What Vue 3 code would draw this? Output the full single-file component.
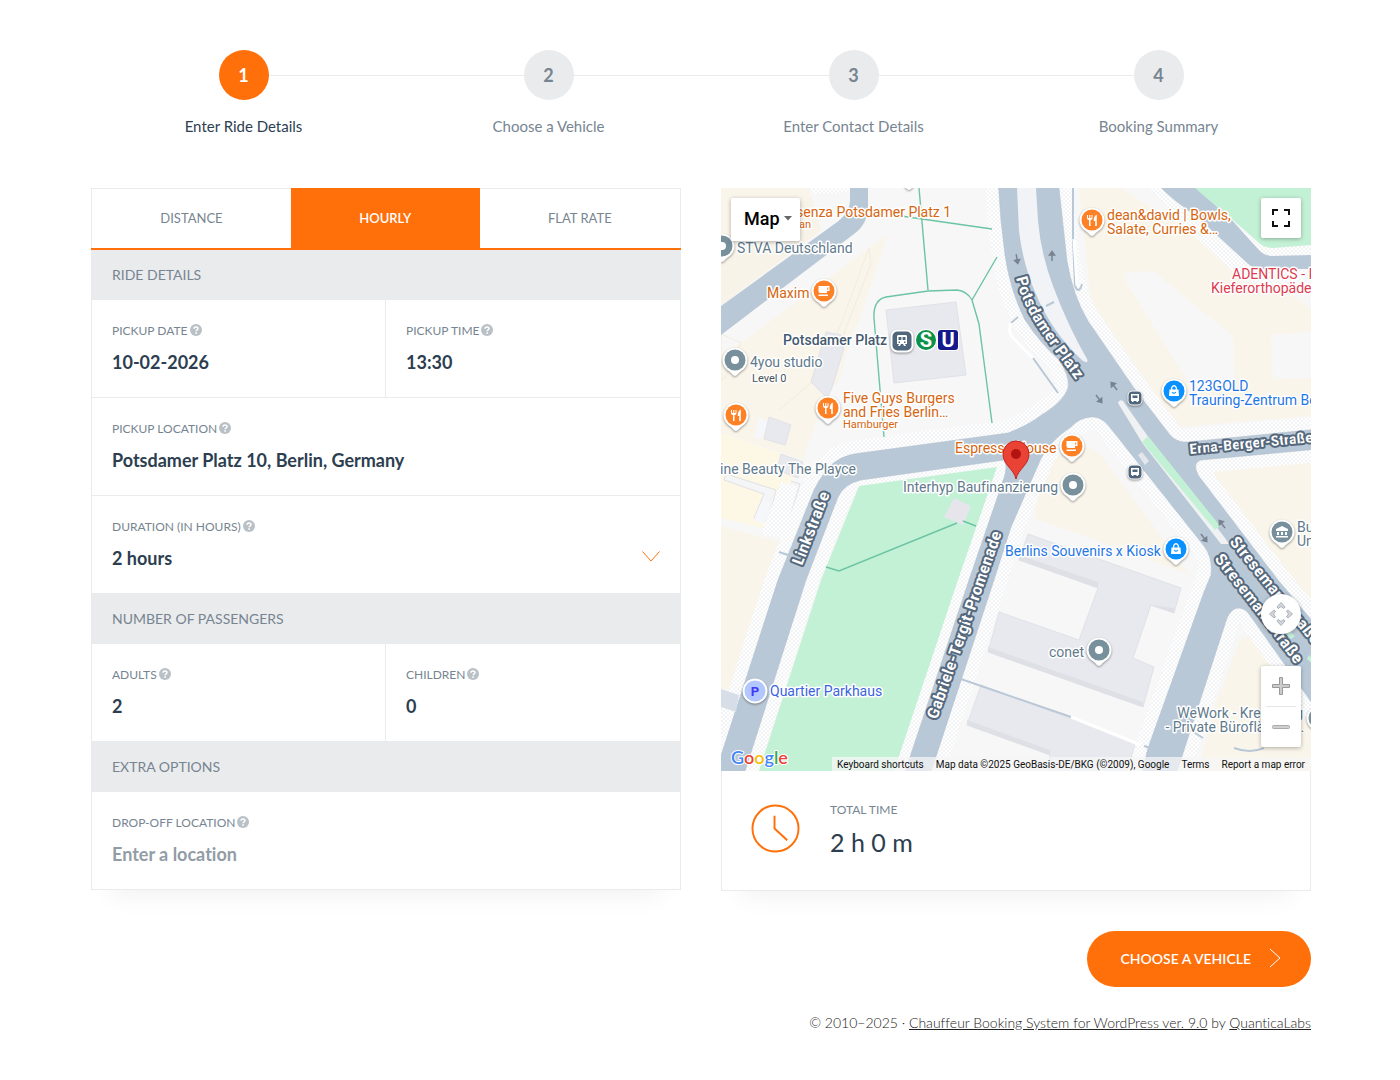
<template>
  <div class="booking">
    <ol class="steps">
      <li v-for="(step, index) in steps" :key="step" class="step" :class="{ active: index === 0 }">
        <span class="step-number">{{ index + 1 }}</span>
        <span class="step-label">{{ step }}</span>
      </li>
    </ol>

    <div class="columns">
      <form class="ride-form" @submit.prevent>
        <div class="tabs">
          <button
            v-for="tab in tabs"
            :key="tab"
            type="button"
            class="tab"
            :class="{ selected: tab === activeTab }"
            @click="activeTab = tab"
          >{{ tab }}</button>
        </div>

        <div class="form-body">
          <template v-for="section in sections" :key="section.title">
            <h2 class="section-title">{{ section.title }}</h2>
            <div class="fields">
              <div v-for="field in section.fields" :key="field.id" class="field" :class="{ half: field.half }">
                <div class="field-head">
                  <label :for="field.id">{{ field.label }}</label>
                  <svg class="help" viewBox="0 0 12 12" aria-hidden="true">
                    <circle cx="6" cy="6" r="6" fill="#b9c0c6" />
                    <path d="M4 4.7C4 2.4 8 2.4 8 4.6C8 5.9 6.1 5.8 6.1 7.3" fill="none" stroke="#fff" stroke-width="1.5" />
                    <rect x="5.3" y="8.2" width="1.6" height="1.6" fill="#fff" />
                  </svg>
                </div>
                <div v-if="field.options" class="select-wrap">
                  <select :id="field.id" v-model="field.value">
                    <option v-for="option in field.options" :key="option">{{ option }}</option>
                  </select>
                  <svg class="chevron" viewBox="0 0 18 11" aria-hidden="true">
                    <path d="M.5 .5L9 10L17.500 .5" fill="none" stroke="#ff700a" />
                  </svg>
                </div>
                <input v-else :id="field.id" v-model="field.value" type="text" :placeholder="field.placeholder" />
              </div>
            </div>
          </template>
        </div>
      </form>

      <div class="side">
        <div class="map">
          <svg class="map-canvas" viewBox="0 0 590 583" preserveAspectRatio="xMidYMid slice">
            <defs>
              <pattern id="pavement" width="4" height="4" patternUnits="userSpaceOnUse">
                <rect width="4" height="4" fill="#fff" />
                <circle cx="1" cy="1" r=".9" fill="#eef0f1" />
                <circle cx="3" cy="3" r=".9" fill="#eef0f1" />
              </pattern>
              <path
                id="roads"
                d="M277 -9L280 33L284 67Q289 102 304 132Q320 156 338 172Q349 188 347 200Q342 214 322 226Q306 238 287 245L140 265Q116 267 104 284Q98 292 93 302L57 392L-5 583V596H20L85 392L117 309Q123 296 140 292L283 272Q287 278 283 290L248 392L180 596H206L273 392L290 339L318 275Q326 255 350 239Q358 230 370 229Q379 228 387 237L483 358Q492 370 490 387L483 404L427 560L418 596H452L506 430Q511 420 517 420Q524 420 528 426L598 525V441L557 392L477 287Q471 275 480 272L598 261V241L467 254Q456 255 449 247L413 200L367 133Q352 108 346 73L337 -9Z"
              />
              <path id="street-potsdamer" d="M295 90C304 130 332 158 372 216" />
              <path id="street-link" d="M81 378L116 288" />
              <path id="street-gabriele" d="M216 532L288 325" />
              <path id="street-erna" d="M469 266L602 253" />
              <path id="street-strese-a" d="M508 354L562 421Q582 443 612 484" />
              <path id="street-strese-b" d="M493 371L547 440L598 508" />
            </defs>

            <rect width="590" height="583" fill="#f7f7f7" />

            <!-- city blocks -->
            <g fill="#faf5ea">
              <path d="M0 0H88L96 46L0 117Z" />
              <path d="M167 46L138 133L130 150L117 195L105 205L82 272L0 245V165L20 155Z" />
              <path d="M0 245L78 272L70 295L42 340L0 330Z" fill="#fdf7e6" />
              <path d="M0 338L60 354L54 375L10 503L0 500Z" />
              <path d="M358 0H400L590 120V228L457 239L370 113Z" />
              <path d="M313 330L320 297Q330 262 352 260Q374 257 381 269L468 386Z" />
              <path d="M493 272L590 264V415L494 292Z" />
              <path d="M519 452L533 446L590 525V583H477L493 520Z" />
            </g>
            <path d="M88 0H129V4L94 6Z" fill="url(#pavement)" />
            <path d="M0 68L90 8L100 42L0 117Z" fill="#f8f3e8" />
            <path d="M403 85L432 83L512 148L514 202L471 200L406 96ZM550 147L590 144V190L552 191Z" fill="#f7f7f7" />
            <path d="M0 146L20 155L4 190L0 192ZM58 222L96 190M96 190L120 136L148 60L150 76L123 145L105 205" fill="none" stroke="#f1ece0" />
            <path d="M5 286L55 302L47 334L33 330L43 306L3 292ZM70 293L79 296L61 354" fill="#f4f5f7" stroke="#e2e1e3" />
            <path d="M38 230L48 233L40 252L33 249ZM42 311L49 314L43 336L33 332Z" fill="#f5f7fa" />
            <path d="M60 294L77 299L62 350L40 346Z" fill="url(#pavement)" />

            <!-- buildings -->
            <g fill="#e8e9ee" stroke="#e1e2e8" stroke-width="1">
              <path d="M165 122L235 114L245 187L173 195Z" />
              <path d="M105 144L120 147L123 160L111 200L106 210L90 194Z" />
              <path d="M48 229L70 237L64 257L43 251Z" />
              <path d="M60 266L82 274L77 290L56 282Z" />
              <path d="M307 346L460 400L453 425L430 417L412 470L433 479L422 519L267 464L278 424L358 452L377 400L298 372Z" />
              <path d="M260 497L415 555L401 596H325L329 567L246 537Z" />
            </g>
            <path d="M267 459L422 514V519L267 464ZM246 532L329 562V567L246 537ZM412 415L453 420V425L428 417ZM298 367L377 394V400L298 372Z" fill="#dfe0e6" />

            <!-- streets -->
            <use href="#roads" fill="none" stroke="url(#pavement)" stroke-width="26" stroke-linejoin="round" />
            <path d="M429 0L470 45L522 93L545 96H590V45H550L505 0Z" fill="url(#pavement)" />
            <path d="M472 0L512 32L538 55Q543 60 552 60L590 57V0Z" fill="#c3f1d5" />
            <path d="M440 0Q455 15 474 27L526 75Q532 81 543 81H590V67L550 68Q542 67 537 61L510 31L474 0Z" fill="#b9c8d7" />
            <path d="M129 0H147V18Q147 36 133 46L0 147V118L112 37Q129 26 129 12Z" fill="#b9c8d7" />
            <path d="M138 298L276 279L237 392L173 583H38L100 392Z" fill="#c3f1d5" />
            <use href="#roads" fill="#b9c8d7" stroke="#aebdcc" stroke-width=".5" />
            <path d="M296 0H315L317 33Q320 66 332 98Q347 138 366 171Q368 176 362 173Q331 145 314 104Q302 76 298 43Z" fill="#f1f3f6" />
            <path d="M397 215Q398 211 402 213L428 250L504 350L508 356L500 356L422 256Z" fill="#f0f1f3" />
            <path d="M427 248L499 338L494 342L421 254ZM568 443L574 448L570 451L566 447ZM588 467L596 475V480L586 471Z" fill="#c3f1d5" />
            <path d="M417 267L421 264L428 273L424 277Z" fill="#e4e6eb" />
            <path d="M0 501L18 507L15 524L0 519Z" fill="#d8dee8" />
            <g fill="none" stroke="#b9c8d7" stroke-width="2">
              <path d="M352 0V51M325 118L333 114M290 135L297 129M312 170L337 205M352 51L354 98Q358 107 361 96M237 490L350 529M423 558L430 560M513 560Q529 566 543 560M466 540L482 550M58 364L67 367" />
            </g>
            <path d="M353 51L356 98M290 135Q286 144 293 151L312 170M350 529L420 557" fill="none" stroke="#fff" stroke-width="3" />
            <path d="M233 310L250 318L242 337L223 329Z" fill="#e5e5eb" />
            <path
              d="M198 0L207 102M180 28L271 41M276 69L251 112M163 249L153 130Q152 112 165 109L207 103L236 102Q246 103 251 112L258 136L271 235M105 379L118 383L236 335M242 333L255 338"
              fill="none" stroke="#6cc4a4" stroke-width="1.400"
            />
            <path
              v-for="a in arrows"
              :key="a.join()"
              d="M0 5V-1M-2.500 -1L0 -4.500L2.500 -1Z"
              :transform="`translate(${a[0]} ${a[1]}) rotate(${a[2]})`"
              fill="#77838f" stroke="#77838f" stroke-width="1.500"
            />

            <!-- labels -->
            <text v-for="s in streets" :key="s.path" class="street" :class="{ minor: s.minor }">
              <textPath :href="'#' + s.path">{{ s.name }}</textPath>
            </text>
            <text
              v-for="p in places"
              :key="p.text + p.x"
              class="place"
              :class="[p.kind, p.size]"
              :x="p.x"
              :y="p.y"
              :text-anchor="p.anchor"
            >{{ p.text }}</text>

            <!-- place markers -->
            <g v-for="m in markers" :key="m.x + '-' + m.y" :transform="`translate(${m.x} ${m.y})`">
              <path class="pin-edge" d="M0 16C-2 16 -3 13 -7 10.500A12.500 12.500 0 1 1 7 10.500C3 13 2 16 0 16Z" />
              <circle r="10.500" :fill="markerColor[m.icon]" />
              <circle v-if="m.icon === 'dot'" r="4" fill="#fff" />
              <path v-else-if="m.icon === 'cup'" d="M-5.500 -5H5.500V0H3V2H-4Q-5.500 2 -5.500 0ZM3.200 -3.500V-1.300H4.200V-3.500ZM-5.500 3.500H4V5H-5.500Z" fill="#fff" fill-rule="evenodd" />
              <path v-else-if="m.icon === 'food'" d="M-5 -5V-2Q-5 0 -3 0V6H-1.500V0Q.5 0 .5 -2V-5H-.5V-2H-1.700V-5H-2.800V-2H-4V-5ZM4.800 -5.500Q1.500 -4 1.700 1H3.200V6H4.800Z" fill="#fff" />
              <g v-else-if="m.icon === 'bag'">
                <path d="M-4.500 -1.500H4.500L5 5H-5Z" fill="#fff" />
                <path d="M-2.300 -1V-3.500Q0 -7 2.300 -3.500V-1" fill="none" stroke="#fff" stroke-width="1.300" />
                <path d="M-1.800 1Q0 3.500 1.800 1" fill="none" stroke="#0a91ff" stroke-width="1.200" />
              </g>
              <path v-else d="M-6 -3L0 -6L6 -3V-1H-6ZM-5 0H-3V3H-5ZM-1 0H1V3H-1ZM3 0H5V3H3ZM-6 4H6V5.500H-6Z" fill="#fff" />
            </g>
            <g transform="translate(34 503)">
              <circle class="pin-edge" r="12.500" />
              <circle r="10.500" fill="#b3c7ff" />
              <text class="glyph" y="5" fill="#4338f5">P</text>
            </g>
            <g transform="translate(181 153)">
              <rect class="pin-edge" x="-11.500" y="-11.500" width="23" height="23" rx="7" />
              <rect x="-9.500" y="-9.500" width="19" height="19" rx="5" fill="#50667c" />
              <path d="M-5 -5Q-5 -6 -3 -6H3Q5 -6 5 -5V3H3L4 5H2L1 3H-1L-2 5H-4L-3 3H-5ZM-3.500 -4V-1H-.6V-4ZM.6 -4V-1H3.500V-4ZM-3.500 .5V2H-2V.5ZM2 .5V2H3.500V.5Z" fill="#fff" fill-rule="evenodd" />
            </g>
            <circle cx="205" cy="152" r="11" fill="#fff" />
            <circle cx="205" cy="152" r="10" fill="#0b9148" />
            <text class="glyph rail" x="205" y="159" fill="#fff">S</text>
            <rect x="216" y="141" width="22" height="22" rx="4" fill="#fff" />
            <rect x="217" y="142" width="20" height="20" rx="3" fill="#14198c" />
            <text class="glyph rail" x="227" y="159" fill="#fff">U</text>
            <g v-for="y in [210, 284]" :key="y" :transform="`translate(414 ${y})`">
              <rect class="pin-edge" x="-7.500" y="-7.500" width="15" height="15" rx="5" />
              <rect x="-6.500" y="-6.500" width="13" height="13" rx="4" fill="#50667c" />
              <path d="M-4 -4H4V3H3V4H1.500V3H-1.500V4H-3V3H-4ZM-2.500 -2.500V0H2.500V-2.500Z" fill="#fff" fill-rule="evenodd" />
            </g>

            <path d="M295 291C293 281 282 277 282 266A13 13 0 1 1 308 266C308 277 297 281 295 291Z" fill="#ea4335" stroke="#c5221f" />
            <circle cx="295" cy="266" r="5" fill="#b31412" />

            <text class="logo" x="10" y="576">
              <tspan fill="#4285f4">G</tspan><tspan fill="#ea4335">o</tspan><tspan fill="#fbbc05">o</tspan><tspan fill="#4285f4">g</tspan><tspan fill="#34a853">l</tspan><tspan fill="#ea4335">e</tspan>
            </text>
          </svg>

          <button type="button" class="map-type">
            Map
            <svg viewBox="0 0 8 5" width="8" height="5" aria-hidden="true"><path d="M0 0H8L4 4.500Z" fill="#666" /></svg>
          </button>
          <button type="button" class="map-fullscreen" aria-label="Toggle fullscreen view">
            <svg viewBox="0 0 18 18" width="18" height="18"><path d="M1 6V1H6M12 1H17V6M17 12V17H12M6 17H1V12" fill="none" stroke="#111" stroke-width="2" /></svg>
          </button>
          <button type="button" class="map-camera" aria-label="Map camera controls">
            <svg viewBox="0 0 24 24" width="24" height="24">
              <path d="M12 .5L16 5L14.800 6.500L12 4.500L9.200 6.500L8 5ZM12 23.500L16 19L14.800 17.500L12 19.500L9.200 17.500L8 19ZM.5 12L5 8L6.500 9.200L4.500 12L6.500 14.800L5 16ZM23.500 12L19 8L17.500 9.200L19.500 12L17.500 14.800L19 16Z" fill="#d3d6da" stroke="#9da4ad" stroke-width=".8" />
            </svg>
          </button>
          <div class="map-zoom">
            <button type="button" aria-label="Zoom in">
              <svg viewBox="0 0 18 18" width="18" height="18"><path d="M7.500 .5H10.500V7.500H17.500V10.500H10.500V17.500H7.500V10.500H.5V7.500H7.500Z" fill="#ccc" stroke="#999" /></svg>
            </button>
            <button type="button" aria-label="Zoom out">
              <svg viewBox="0 0 18 18" width="18" height="18"><rect x=".5" y="7.500" width="17" height="3" rx="1" fill="#d0d0d0" stroke="#aaa" /></svg>
            </button>
          </div>
          <div class="map-credits">
            <button type="button">Keyboard shortcuts</button>
            <span>Map data ©2025 GeoBasis-DE/BKG (©2009), Google</span>
            <a href="#">Terms</a>
            <a href="#">Report a map error</a>
          </div>
        </div>

        <div class="summary">
          <svg class="clock" viewBox="0 0 50 50" aria-hidden="true">
            <circle cx="25" cy="25" r="23.500" />
            <path d="M24 12V25L37 37" />
          </svg>
          <div>
            <div class="summary-label">TOTAL TIME</div>
            <div class="summary-value">2 h 0 m</div>
          </div>
        </div>
      </div>
    </div>

    <div class="actions">
      <button type="button" class="next">
        CHOOSE A VEHICLE
        <svg viewBox="0 0 12 20" width="12" height="20" aria-hidden="true"><path d="M1 1L11 10L1 19" fill="none" stroke="#fff" /></svg>
      </button>
    </div>

    <footer class="footer">
      © 2010–2025 · <a href="#">Chauffeur Booking System for WordPress ver. 9.0</a> by <a href="#">QuanticaLabs</a>
    </footer>
  </div>
</template>

<script setup>
import { ref, reactive } from 'vue'

const steps = ['Enter Ride Details', 'Choose a Vehicle', 'Enter Contact Details', 'Booking Summary']

const tabs = ['DISTANCE', 'HOURLY', 'FLAT RATE']
const activeTab = ref('HOURLY')

const sections = reactive([
  {
    title: 'RIDE DETAILS',
    fields: [
      { id: 'pickup-date', label: 'PICKUP DATE', value: '10-02-2026', half: true },
      { id: 'pickup-time', label: 'PICKUP TIME', value: '13:30', half: true },
      { id: 'pickup-location', label: 'PICKUP LOCATION', value: 'Potsdamer Platz 10, Berlin, Germany' },
      { id: 'duration', label: 'DURATION (IN HOURS)', value: '2 hours', options: ['1 hour', '2 hours', '3 hours', '4 hours'] },
    ],
  },
  {
    title: 'NUMBER OF PASSENGERS',
    fields: [
      { id: 'adults', label: 'ADULTS', value: '2', half: true },
      { id: 'children', label: 'CHILDREN', value: '0', half: true },
    ],
  },
  {
    title: 'EXTRA OPTIONS',
    fields: [
      { id: 'dropoff', label: 'DROP-OFF LOCATION', value: '', placeholder: 'Enter a location' },
    ],
  },
])

const markerColor = { dot: '#78909c', museum: '#78909c', cup: '#ff8126', food: '#ff8126', bag: '#0a91ff' }

const markers = [
  { x: 188, y: -14, icon: 'dot' },
  { x: 1, y: 58, icon: 'dot' },
  { x: 103, y: 103, icon: 'cup' },
  { x: 371, y: 32, icon: 'food' },
  { x: 14, y: 172, icon: 'dot' },
  { x: 15, y: 227, icon: 'food' },
  { x: 107, y: 220, icon: 'food' },
  { x: 453, y: 203, icon: 'bag' },
  { x: 351, y: 258, icon: 'cup' },
  { x: 352, y: 297, icon: 'dot' },
  { x: 455, y: 361, icon: 'bag' },
  { x: 561, y: 344, icon: 'museum' },
  { x: 378, y: 462, icon: 'dot' },
  { x: 598, y: 530, icon: 'dot' },
]

// x, y, heading in degrees
const arrows = [
  [296, 71, 170],
  [331, 68, 0],
  [393, 198, -38],
  [378, 211, 142],
  [501, 336, -38],
  [483, 350, 142],
]

const streets = [
  { path: 'street-potsdamer', name: 'Potsdamer Platz' },
  { path: 'street-link', name: 'Linkstraße' },
  { path: 'street-gabriele', name: 'Gabriele-Tergit-Promenade' },
  { path: 'street-erna', name: 'Erna-Berger-Straße', minor: true },
  { path: 'street-strese-a', name: 'Stresemannstraße' },
  { path: 'street-strese-b', name: 'Stresemannstraße' },
]

const places = [
  { text: 'senza Potsdamer Platz 1', x: 75, y: 29, kind: 'food' },
  { text: 'an', x: 78, y: 40, kind: 'food', size: 'small' },
  { text: 'STVA Deutschland', x: 16, y: 65 },
  { text: 'Maxim', x: 46, y: 110, kind: 'food' },
  { text: 'Potsdamer Platz', x: 62, y: 157, kind: 'station' },
  { text: '4you studio', x: 29, y: 179 },
  { text: 'Level 0', x: 31, y: 194, kind: 'dark', size: 'small' },
  { text: 'Five Guys Burgers', x: 122, y: 215, kind: 'food' },
  { text: 'and Fries Berlin…', x: 122, y: 229, kind: 'food' },
  { text: 'Hamburger', x: 122, y: 240, kind: 'food', size: 'small' },
  { text: 'ine Beauty The Playce', x: -1, y: 286 },
  { text: 'Espresso House', x: 234, y: 265, kind: 'food' },
  { text: 'Interhyp Baufinanzierung', x: 182, y: 304 },
  { text: 'dean&david | Bowls,', x: 386, y: 32, kind: 'food' },
  { text: 'Salate, Curries &…', x: 386, y: 46, kind: 'food' },
  { text: 'ADENTICS - Ihre', x: 511, y: 91, kind: 'health' },
  { text: 'Kieferorthopäden', x: 490, y: 105, kind: 'health' },
  { text: '123GOLD', x: 468, y: 203, kind: 'shop' },
  { text: 'Trauring-Zentrum Berlin', x: 468, y: 217, kind: 'shop' },
  { text: 'Berlins Souvenirs x Kiosk', x: 284, y: 368, kind: 'shop' },
  { text: 'Bundesrat', x: 576, y: 344 },
  { text: 'Ungarn', x: 576, y: 358 },
  { text: 'conet', x: 328, y: 469 },
  { text: 'Quartier Parkhaus', x: 49, y: 508, kind: 'parking' },
  { text: 'WeWork - Kreuzberg', x: 582, y: 530, anchor: 'end' },
  { text: '- Private Büroflächen…', x: 583, y: 544, anchor: 'end' },
]
</script>

<style>
body {
  background: #fff;
}
</style>

<style scoped>
.booking {
  padding: 50px 89px 40px 91px;
  font-family: Lato, 'Liberation Sans', sans-serif;
  font-variant-ligatures: none;
  color: #2c3e50;
}

.booking *,
.booking *::before {
  box-sizing: border-box;
}

button,
input,
select {
  font-family: inherit;
  font-variant-ligatures: inherit;
  margin: 0;
}

button {
  border: 0;
  cursor: pointer;
}

.steps {
  display: grid;
  grid-template-columns: repeat(4, 1fr);
  list-style: none;
  margin: 0;
  padding: 0;
}

.step {
  position: relative;
  display: flex;
  flex-direction: column;
  align-items: center;
  color: #778591;
}

.step + .step::before {
  content: '';
  position: absolute;
  top: 25px;
  right: 50%;
  width: 100%;
  height: 1px;
  background: #eaebed;
}

.step-number {
  position: relative;
  z-index: 1;
  width: 50px;
  height: 50px;
  line-height: 50px;
  border-radius: 50%;
  background: #eaebed;
  font-size: 18px;
  font-weight: 700;
  text-align: center;
}

.step-label {
  margin-top: 16px;
  font-size: 15px;
  line-height: 20px;
}

.step.active {
  z-index: 1;
  color: #2c3e50;
}

.step.active .step-number {
  background: #ff700a;
  color: #fff;
}

.columns {
  display: grid;
  grid-template-columns: minmax(0, 1fr) minmax(0, 1fr);
  gap: 40px;
  align-items: start;
  margin-top: 52px;
}

.ride-form,
.side {
  box-shadow: 0 25px 25px -20px rgba(0, 0, 0, 0.06);
}

.tabs {
  display: flex;
  border-bottom: 2px solid #ff700a;
}

.tab {
  flex: 1 1 auto;
  height: 60px;
  padding: 0 0 2px;
  border-top: 1px solid #eaebed;
  background: #fff;
  color: #778591;
  font-size: 13px;
}

.tab:first-child {
  border-left: 1px solid #eaebed;
}

.tab:last-child {
  border-right: 1px solid #eaebed;
}

.tab.selected {
  border-color: #ff700a;
  background: #ff700a;
  color: #fff;
  font-weight: 600;
}

.form-body {
  border: 1px solid #eaebed;
  border-top: 0;
  background: #fff;
}

.section-title {
  margin: 0;
  padding: 0 20px;
  background: #eaebed;
  color: #778591;
  font-size: 14px;
  font-weight: 400;
  line-height: 50px;
}

.fields {
  display: flex;
  flex-wrap: wrap;
}

.field {
  width: 100%;
  height: 98px;
  padding: 20px 20px 0;
  border-bottom: 1px solid #eaebed;
}

.fields:last-child .field {
  height: 97px;
  border-bottom: 0;
}

.field.half {
  width: 50%;
}

.field.half:first-child {
  border-right: 1px solid #eaebed;
}

.field-head {
  display: flex;
  align-items: center;
  gap: 2px;
  height: 20px;
  color: #778591;
  font-size: 12px;
  line-height: 20px;
}

.field-head label {
  padding-top: 2px;
}

.help {
  width: 12px;
  height: 12px;
}

.field input,
.field select {
  display: block;
  width: 100%;
  height: 24px;
  margin-top: 10px;
  padding: 0;
  border: 0;
  outline: 0;
  appearance: none;
  background: transparent;
  color: #2c3e50;
  font-size: 18px;
  font-weight: 700;
}

.field input::placeholder {
  color: #929ca5;
}

.select-wrap {
  position: relative;
}

.chevron {
  position: absolute;
  top: 5px;
  right: 0;
  width: 18px;
  height: 11px;
  pointer-events: none;
}

.map {
  position: relative;
  aspect-ratio: 590 / 583;
  overflow: hidden;
  font-family: Roboto, 'Liberation Sans', sans-serif;
}

.map-canvas {
  display: block;
  width: 100%;
  height: 100%;
}

.place {
  fill: #5f7a8c;
  stroke: #fff;
  stroke-width: 3px;
  stroke-linejoin: round;
  paint-order: stroke;
  font-size: 14px;
}

.place.small {
  font-size: 11px;
}

.place.food {
  fill: #d5660f;
}

.place.shop {
  fill: #1f77e6;
}

.place.health {
  fill: #dc3b50;
}

.place.parking {
  fill: #3c63e0;
}

.place.dark {
  fill: #48525c;
}

.place.station {
  fill: #455a6e;
  font-weight: 500;
}

.street {
  fill: #fff;
  stroke: #55687c;
  stroke-width: 4px;
  stroke-linejoin: round;
  paint-order: stroke;
  font-size: 16px;
  font-weight: 700;
}

.street.minor {
  font-size: 14px;
}

.pin-edge {
  fill: #fff;
  filter: drop-shadow(0 1px 1px rgba(0, 0, 0, 0.4));
}

.glyph {
  font-size: 13px;
  font-weight: 700;
  text-anchor: middle;
}

.glyph.rail {
  font-size: 20px;
}

.logo {
  stroke: #fff;
  stroke-width: 2px;
  paint-order: stroke;
  font-family: Lato, sans-serif;
  font-size: 18px;
  font-weight: 600;
}

.map-type,
.map-fullscreen,
.map-camera,
.map-zoom {
  position: absolute;
  background: #fff;
  border-radius: 2px;
  box-shadow: 0 1px 4px rgba(0, 0, 0, 0.3);
}

.map-type {
  top: 10px;
  left: 10px;
  display: flex;
  align-items: center;
  gap: 4px;
  height: 43px;
  padding: 0 8px 2px 13px;
  color: #000;
  font-size: 18px;
  font-weight: 500;
}

.map-fullscreen,
.map-camera {
  right: 10px;
  display: grid;
  place-items: center;
  width: 40px;
  height: 40px;
  padding: 0;
}

.map-fullscreen {
  top: 10px;
}

.map-camera {
  bottom: 137px;
  border-radius: 50%;
}

.map-zoom {
  right: 10px;
  bottom: 24px;
  width: 40px;
}

.map-zoom button {
  display: grid;
  place-items: center;
  width: 100%;
  height: 40px;
  padding: 0;
  background: none;
}

.map-zoom button + button::before {
  content: '';
  position: absolute;
  top: 40px;
  left: 5px;
  right: 5px;
  height: 1px;
  background: #e6e6e6;
}

.map-zoom button + button {
  height: 41px;
}

.map-credits {
  position: absolute;
  right: 0;
  bottom: 0;
  display: flex;
  gap: 12px;
  height: 14px;
  padding: 0 6px 0 5px;
  background: rgba(245, 245, 245, 0.75);
  color: #111;
  font-size: 10px;
  line-height: 16px;
  white-space: nowrap;
}

.map-credits button,
.map-credits a {
  padding: 0;
  background: none;
  color: inherit;
  font-size: inherit;
  line-height: inherit;
  text-decoration: none;
}

.summary {
  display: flex;
  gap: 30px;
  height: 120px;
  padding: 29px;
  border: 1px solid #eaebed;
  border-top: 0;
  background: #fff;
}

.clock {
  width: 49px;
  height: 49px;
  margin-top: 4px;
  fill: none;
  stroke: #ff700a;
  stroke-width: 2px;
}

.summary-label {
  color: #778591;
  font-size: 12px;
  line-height: 20px;
}

.summary-value {
  margin-top: 6px;
  font-size: 25px;
  line-height: 32px;
}

.actions {
  display: flex;
  justify-content: flex-end;
  margin-top: 40px;
}

.next {
  display: flex;
  align-items: center;
  gap: 18px;
  height: 56px;
  padding: 0 30px 2px 34px;
  border-radius: 28px;
  background: #ff700a;
  color: #fff;
  font-size: 14px;
  font-weight: 600;
}

.footer {
  margin-top: 26px;
  color: #222;
  font-size: 14px;
  font-weight: 300;
  line-height: 20px;
  text-align: right;
}

.footer a {
  color: inherit;
}
</style>
